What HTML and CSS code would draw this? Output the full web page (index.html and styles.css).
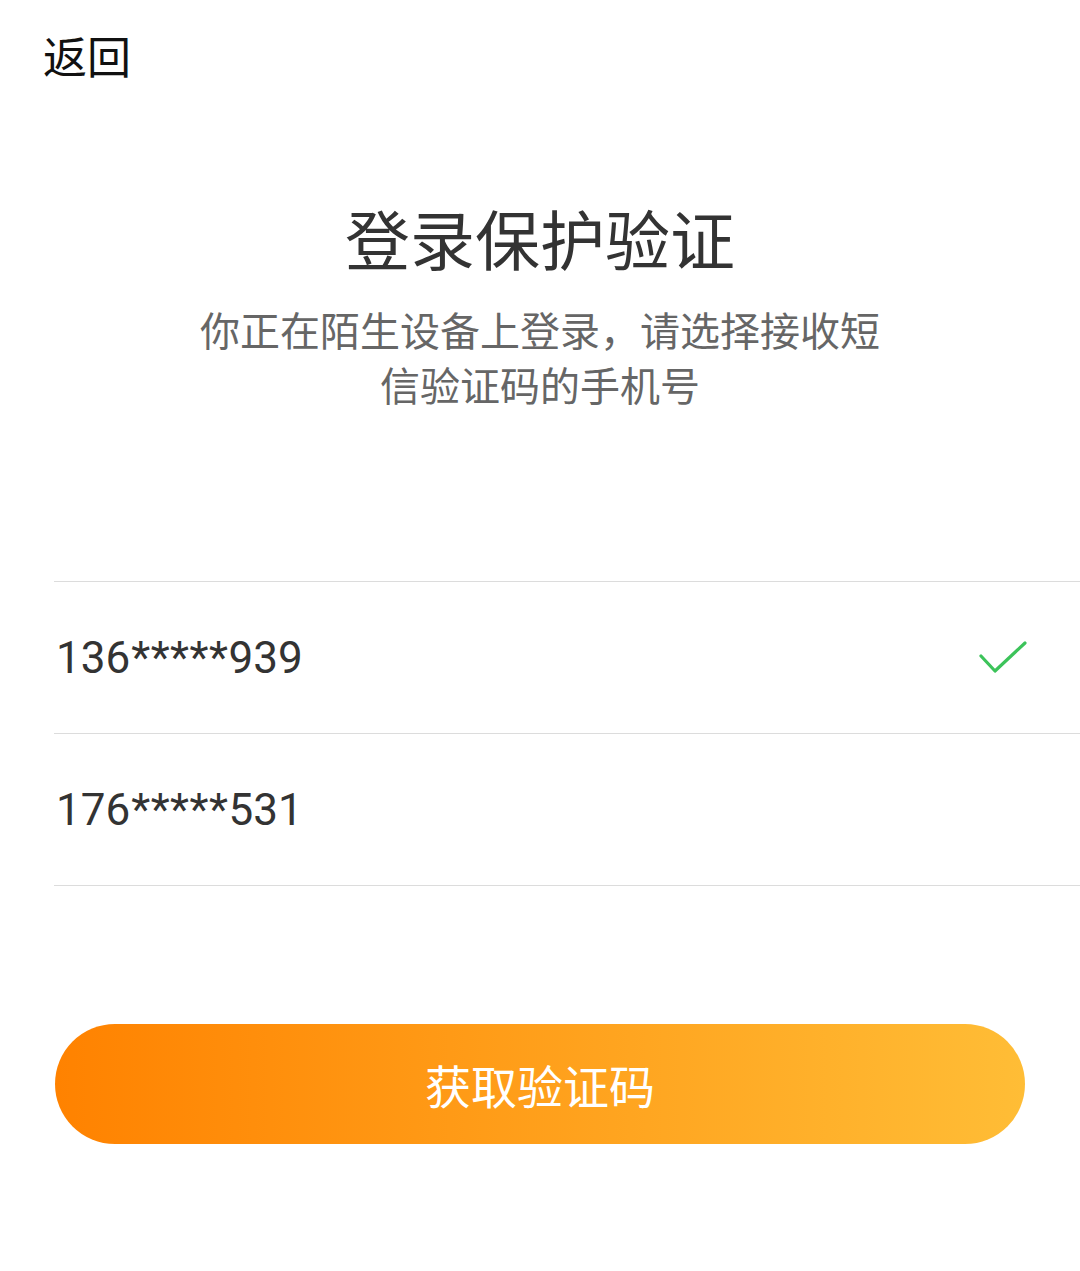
FILE: index.html
```html
<!DOCTYPE html>
<html lang="zh-CN">

<head>
  <meta charset="UTF-8">
  <meta name="viewport" content="width=device-width, initial-scale=1.0">
  <title>登录保护验证</title>
  <link rel="stylesheet" href="styles.css">
</head>

<body>
  <!-- top bar with back link -->
  <div class="top-bar">
    <a class="back" href="#">返回</a>
  </div>

  <h1 class="title">登录保护验证</h1>
  <p class="subtitle">你正在陌生设备上登录，请选择接收短<br>信验证码的手机号</p>

  <!-- phone number choices -->
  <ul class="phone-list">
    <li class="phone-item selected">
      <span class="phone">136<span class="mask">*****</span>939</span>
      <svg class="check" width="48" height="36" viewBox="0 0 48 36">
        <path d="M2 16 L16 31 L46 3" fill="none" stroke="#3cc35a" stroke-width="3.2" stroke-linecap="round" stroke-linejoin="round" />
      </svg>
    </li>
    <li class="phone-item">
      <span class="phone">176<span class="mask">*****</span>531</span>
    </li>
  </ul>

  <button class="get-code" type="button">获取验证码</button>
</body>

</html>
```

FILE: styles.css
```css
/* page base */

body {
  margin: 0;
  padding: 0;
  background-color: #fff;
  font-family: "Noto Sans CJK SC", "Noto Sans", sans-serif;
  color: #333;
}

.top-bar {
  padding: 33px 0 0 43px;
}

.back {
  display: inline-block;
  font-size: 44px;
  line-height: 44px;
  color: #111;
  text-decoration: none;
}

.title {
  margin: 126px 0 0;
  font-size: 65px;
  line-height: 64px;
  font-weight: 400;
  text-align: center;
  color: #333;
}

.subtitle {
  margin: 33px 0 0;
  font-size: 40px;
  line-height: 55px;
  text-align: center;
  color: #666;
}

/* phone number list */

.phone-list {
  list-style: none;
  margin: 169px 0 0 54px;
  padding: 0;
  border-bottom: 1px solid #dcdcdc;
}

.phone-item {
  display: flex;
  align-items: center;
  justify-content: space-between;
  height: 151px;
  padding: 0 53px 0 2px;
  border-top: 1px solid #dcdcdc;
}

.phone {
  font-family: Roboto, "Noto Sans", sans-serif;
  font-size: 44px;
  color: #333;
}

.mask {
  letter-spacing: 0.5px;
  margin-left: 1px;
}

.check {
  display: block;
}

/* main action */

.get-code {
  display: block;
  width: 970px;
  height: 120px;
  margin: 138px 0 0 55px;
  border: none;
  border-radius: 60px;
  background: linear-gradient(to right, #ff8200, #ffbd36);
  color: #fff;
  font-family: "Noto Sans CJK SC", sans-serif;
  font-size: 46px;
  cursor: pointer;
}
```
